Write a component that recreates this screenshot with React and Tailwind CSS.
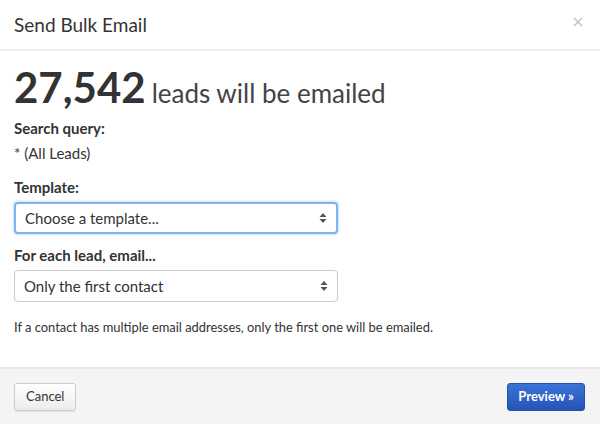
import React from 'react'

function Arrows() {
  return (
    <svg width="8" height="12" viewBox="0 0 8 12" className="text-[#555]" aria-hidden="true">
      <path d="M4 1 L7.5 5 H0.5 Z" fill="currentColor" />
      <path d="M4 11 L7.5 7 H0.5 Z" fill="currentColor" />
    </svg>
  )
}

function SelectBox({ label, focused }) {
  return (
    <div
      className={`flex h-[32px] w-[324px] items-center justify-between rounded-[4px] bg-white pl-[9px] pr-[9px] text-[15px] text-[#333] ${
        focused
          ? 'border-2 border-[#7fb2f0] shadow-[0_0_3px_rgba(80,150,240,0.6)]'
          : 'border border-[#ccc]'
      }`}
    >
      <span>{label}</span>
      <Arrows />
    </div>
  )
}

export default function App() {
  return (
    <div className="flex h-[424px] w-[600px] flex-col bg-white font-['Lato',sans-serif] text-[#333]">
      <header className="flex h-[51px] items-center justify-between border-b-2 border-[#efefef] pl-[14px] pr-[17px]">
        <h1 className="text-[19px] leading-none text-[#333]">Send Bulk Email</h1>
        <svg width="10" height="10" viewBox="0 0 10 10" className="mb-[6px] text-[#c4c4c4]" aria-label="Close">
          <path d="M1 1 L9 9 M9 1 L1 9" stroke="currentColor" strokeWidth="1.6" />
        </svg>
      </header>

      <main className="flex flex-1 flex-col px-[14px] pt-[10px]">
        <div className="flex items-baseline gap-[6px]">
          <span className="text-[42px] font-bold leading-[52px] text-[#333]">27,542</span>
          <span className="text-[26px] text-[#444]">leads will be emailed</span>
        </div>

        <div className="mt-[5px] text-[15px] font-bold leading-[20px]">Search query:</div>
        <div className="mt-[5px] text-[15px] leading-[20px]">* (All Leads)</div>

        <div className="mt-[14px] text-[15px] font-bold leading-[20px]">Template:</div>
        <div className="mt-[5px]">
          <SelectBox label="Choose a template..." focused />
        </div>

        <div className="mt-[11px] text-[15px] font-bold leading-[20px]">For each lead, email...</div>
        <div className="mt-[5px]">
          <SelectBox label="Only the first contact" />
        </div>

        <p className="mt-[16px] text-[12.9px] leading-[18px] text-[#333]">
          If a contact has multiple email addresses, only the first one will be emailed.
        </p>
      </main>

      <footer className="flex h-[57px] items-center justify-between border-t-2 border-[#e8e8e8] bg-[#f4f4f4] pl-[14px] pr-[15px] pt-[1px]">
        <button
          type="button"
          className="h-[28px] rounded-[3px] border border-[#ccc] bg-gradient-to-b from-white to-[#ececec] px-[11px] text-[13px] text-[#333] shadow-[0_1px_1px_rgba(0,0,0,0.08)]"
        >
          Cancel
        </button>
        <button
          type="button"
          className="h-[28px] rounded-[3px] border border-[#2350a8] bg-gradient-to-b from-[#3b73d6] to-[#2454b8] px-[10px] text-[13px] font-bold text-white"
        >
          Preview »
        </button>
      </footer>
    </div>
  )
}
